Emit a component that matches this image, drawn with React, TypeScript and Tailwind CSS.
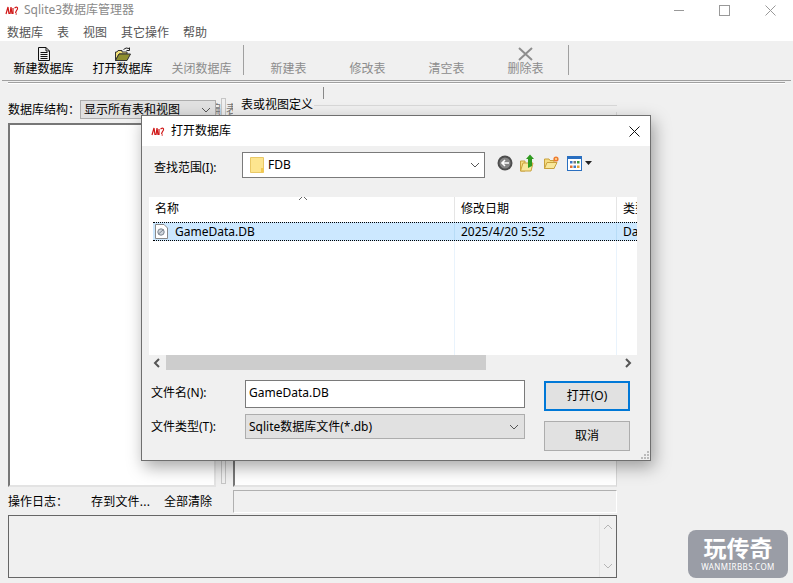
const cjk = "font-['Noto_Sans','Noto_Sans_CJK_SC',sans-serif]"

function AppLogo() {
  return (
    <svg width="14" height="10" viewBox="0 0 14 10" fill="none" stroke="#d01818" strokeWidth="1.2">
      <path d="M1 9 L3 2 L4 9 M5 9 L6 2 L7 9 M8 3 L8 9 M9.5 3 Q13 1 12.5 4 Q11 6 10.5 8 M10.5 9 L12 9" />
    </svg>
  )
}

function DocIcon() {
  return (
    <svg width="12" height="14" viewBox="0 0 12 14" fill="none" stroke="#111" strokeWidth="1">
      <path d="M.5 .5 H8 L11.5 4 V13.5 H.5 Z M8 .5 V4 H11.5" />
      <path d="M2.5 5.5 H9.5 M2.5 7.5 H9.5 M2.5 9.5 H9.5 M2.5 11.5 H9.5" />
    </svg>
  )
}

function OpenFolderIcon() {
  return (
    <svg width="16" height="14" viewBox="0 0 16 14" fill="none">
      <path d="M.5 5 H2 L3 3.5 H7 V5 H12 V7 H4 L.5 13.5 Z" fill="#f3e27a" stroke="#333" />
      <path d="M4 7 H15.5 L12 13.5 H.5 Z" fill="#8f8f30" stroke="#333" />
      <path d="M8.5 2.5 Q11 0 14 1.5 M14.5 .5 V3.5 H11.5" stroke="#222" />
    </svg>
  )
}

function DeleteIcon() {
  return (
    <svg width="15" height="14" viewBox="0 0 15 14" fill="none" stroke="#8e8e8e" strokeWidth="2">
      <path d="M1 1 L14 13 M14 1 L1 13" />
    </svg>
  )
}

function ToolButton({ label, icon, disabled }: { label: string; icon?: React.ReactNode; disabled?: boolean }) {
  return (
    <div className={`flex w-[79px] flex-col items-center ${disabled ? "text-[#8c8c8c]" : "text-black"}`}>
      <div className="flex h-[20px] items-end justify-center">{icon}</div>
      <span className="text-xs leading-[16px]">{label}</span>
    </div>
  )
}

function Chevron({ dir = "down", color = "#555" }: { dir?: "down" | "up" | "left" | "right"; color?: string }) {
  const d = {
    down: "M1 1 L5 5 L9 1",
    up: "M1 5 L5 1 L9 5",
    left: "M6 1 L2 5 L6 9",
    right: "M2 1 L6 5 L2 9",
  }[dir]
  const vertical = dir === "down" || dir === "up"
  return (
    <svg width={vertical ? 10 : 8} height={vertical ? 6 : 10} viewBox={vertical ? "0 0 10 6" : "0 0 8 10"} fill="none" stroke={color} strokeWidth={vertical ? 1 : 2}>
      <path d={d} />
    </svg>
  )
}

function NavIcons() {
  return (
    <div className="ml-3 mt-[2px] flex items-center">
      <svg width="16" height="16" viewBox="0 0 16 16">
        <circle cx="8" cy="8" r="7.5" fill="#4d4d4d" />
        <circle cx="8" cy="8" r="5.5" fill="#858585" />
        <path d="M12 8 H5 M8 5 L5 8 L8 11" fill="none" stroke="#fff" strokeWidth="1.6" />
      </svg>
      <svg className="ml-[7px]" width="15" height="18" viewBox="0 0 15 18">
        <path d="M.5 7 H5 V17 L.5 17 Z" fill="#f5dc80" stroke="#c9a13c" />
        <path d="M.5 17 L3 9 H13 L11 17 Z" fill="#f8e79a" stroke="#c9a13c" />
        <path d="M8 14 V5 H6 L10 .5 L14 5 H12 V12 Z" fill="#2f9a20" />
      </svg>
      <svg className="ml-[9px]" width="15" height="14" viewBox="0 0 15 14">
        <path d="M.5 3 H5 L6 4.5 H10 V12.5 H.5 Z" fill="#f5dc80" stroke="#c9a13c" />
        <path d="M.5 12.5 L3 6.5 H13 L10 12.5 Z" fill="#f8e79a" stroke="#c9a13c" />
        <circle cx="12" cy="3" r="2.6" fill="#ee7b2e" />
        <circle cx="12" cy="3" r="1" fill="#ffe0a0" />
      </svg>
      <svg className="ml-2" width="15" height="15" viewBox="0 0 15 15">
        <rect x=".5" y=".5" width="14" height="14" fill="#fff" stroke="#2a6fc0" />
        <rect x="1" y="1" width="13" height="2" fill="#2a6fc0" />
        <rect x="3" y="5" width="2.5" height="2.5" fill="#3b78c8" />
        <rect x="6.5" y="5" width="2.5" height="2.5" fill="#777" />
        <rect x="10" y="5" width="2.5" height="2.5" fill="#3a9a40" />
        <rect x="3" y="9.5" width="2.5" height="2.5" fill="#e07030" />
        <rect x="6.5" y="9.5" width="2.5" height="2.5" fill="#3b78c8" />
        <rect x="10" y="9.5" width="2.5" height="2.5" fill="#e0a030" />
      </svg>
      <svg className="ml-[3px]" width="7" height="4" viewBox="0 0 7 4">
        <path d="M0 0 H7 L3.5 4 Z" fill="#222" />
      </svg>
    </div>
  )
}

function FileDialog() {
  return (
    <div className="absolute left-[141px] top-[115px] flex h-[346px] w-[510px] flex-col border border-[#6f6f6f] bg-[#f0f0f0] shadow-[3px_6px_16px_rgba(0,0,0,0.35)]">
      <div className="flex h-[30px] shrink-0 items-center bg-white pl-[9px] text-xs">
        <AppLogo />
        <span className="ml-[6px]">打开数据库</span>
        <svg className="ml-auto mr-[10px]" width="11" height="11" viewBox="0 0 11 11" stroke="#111" fill="none">
          <path d="M.5 .5 L10.5 10.5 M10.5 .5 L.5 10.5" />
        </svg>
      </div>

      <div className="flex h-[51px] shrink-0 items-start pt-[6px]">
        <span className="ml-3 mt-[8px] w-[88px] text-xs leading-[16px]">查找范围(I):</span>
        <div className="flex h-[26px] w-[243px] items-center border border-[#7a7a7a] bg-white pl-[7px] pr-[3px] text-xs">
          <svg width="14" height="16" viewBox="0 0 14 16">
            <path d="M.5 .5 H13.5 V15.5 H.5 Z" fill="#fde58f" stroke="#e9c866" />
            <path d="M11 11 H13.5 V15.5 H11 Z" fill="#f3c94f" />
          </svg>
          <span className="ml-[4px]">FDB</span>
          <span className="ml-auto mr-[1px] flex"><Chevron /></span>
        </div>
        <NavIcons />
      </div>

      <div className="relative ml-[7px] h-[158px] w-[488px] shrink-0 overflow-hidden bg-white text-xs">
        <div className="flex h-[25px] items-center">
          <span className="relative flex h-full w-[306px] shrink-0 items-center border-r border-[#e5e5e5] pb-[2px] pl-[6px]">
            名称
            <span className="absolute left-[149px] top-[-2px] flex"><Chevron dir="up" color="#666" /></span>
          </span>
          <span className="flex h-full w-[162px] shrink-0 items-center border-r border-[#e5e5e5] pb-[2px] pl-[6px]">修改日期</span>
          <span className="shrink-0 whitespace-nowrap pb-[2px] pl-[6px]">类型</span>
        </div>
        <div className="ml-1 flex h-[19px] items-center border-y border-dotted border-black bg-[#cce8ff]">
          <div className="flex w-[301px] shrink-0 items-center pl-[2px]">
            <svg width="13" height="15" viewBox="0 0 13 15">
              <path d="M.5 .5 H9 L12.5 4 V14.5 H.5 Z" fill="#fff" stroke="#8a8a8a" />
              <circle cx="6" cy="8" r="3.2" fill="#d0d6dc" stroke="#7a8490" />
              <path d="M3.5 10 L8.5 5.5" stroke="#7a8490" />
            </svg>
            <span className="ml-[7px]">GameData.DB</span>
          </div>
          <span className="w-[162px] shrink-0 border-l border-[#b7dcf7] pl-[6px]">2025/4/20 5:52</span>
          <span className="shrink-0 border-l border-[#b7dcf7] pl-[6px]">Da</span>
        </div>
        <div className="absolute left-[305px] top-[44px] h-[114px] w-px bg-[#e9f3fc]" />
        <div className="absolute left-[467px] top-[44px] h-[114px] w-px bg-[#e9f3fc]" />
      </div>

      <div className="ml-[7px] flex h-[15px] w-[488px] shrink-0 items-center">
        <span className="ml-1 flex w-[13px]"><Chevron dir="left" /></span>
        <div className="h-full w-[320px] bg-[#cdcdcd]" />
        <span className="ml-auto mr-[5px] flex"><Chevron dir="right" /></span>
      </div>

      <div className="flex flex-1 items-start pt-[10px]">
        <div className="ml-[9px] flex w-[374px] flex-col text-xs">
          <div className="flex items-center">
            <span className="w-[94px] pb-[2px]">文件名(N):</span>
            <div className="flex h-[28px] w-[280px] items-center border border-[#7a7a7a] bg-white pb-[2px] pl-[3px]">GameData.DB</div>
          </div>
          <div className="mt-[6px] flex items-center">
            <span className="w-[94px]">文件类型(T):</span>
            <div className="flex h-[25px] w-[280px] items-center border border-[#adadad] bg-[#e1e1e1] pl-[3px] pr-[5px]">
              Sqlite数据库文件(*.db)
              <span className="ml-auto flex"><Chevron /></span>
            </div>
          </div>
        </div>
        <div className="ml-[19px] flex flex-col text-xs">
          <div className="mt-px flex h-[30px] w-[86px] items-center justify-center border-2 border-[#0078d7] bg-[#e1e1e1]">打开(O)</div>
          <div className="mt-[10px] flex h-[30px] w-[86px] items-center justify-center border border-[#adadad] bg-[#e1e1e1]">取消</div>
        </div>
      </div>
      <div className="absolute bottom-px right-px grid grid-cols-3 gap-px">
        <i className="col-start-3 h-[2px] w-[2px] bg-[#bbb]" />
        <i className="col-start-2 h-[2px] w-[2px] bg-[#bbb]" />
        <i className="h-[2px] w-[2px] bg-[#bbb]" />
        <i className="h-[2px] w-[2px] bg-[#bbb]" />
        <i className="h-[2px] w-[2px] bg-[#bbb]" />
        <i className="h-[2px] w-[2px] bg-[#bbb]" />
      </div>
    </div>
  )
}

export default function App() {
  return (
    <div className={`relative flex h-[583px] w-[793px] flex-col overflow-hidden bg-[#f0f0f0] text-black ${cjk}`}>
      {/* title bar + menu */}
      <div className="h-[41px] shrink-0 bg-white">
        <div className="flex h-[20px] items-center pl-[5px]">
          <AppLogo />
          <span className="ml-[5px] text-xs text-[#8a8a8a]">Sqlite3数据库管理器</span>
          <div className="ml-auto flex items-center text-[#888]">
            <span className="h-px w-[10px] bg-[#999]" />
            <span className="ml-[35px] h-[11px] w-[11px] border border-[#999]" />
            <svg className="ml-[35px] mr-[17px]" width="11" height="11" viewBox="0 0 11 11" fill="none" stroke="#999">
              <path d="M.5 .5 L10.5 10.5 M10.5 .5 L.5 10.5" />
            </svg>
          </div>
        </div>
        <div className="mt-[4px] flex gap-[14px] pl-[7px] text-xs leading-[18px] text-[#555]">
          <span>数据库</span>
          <span>表</span>
          <span>视图</span>
          <span>其它操作</span>
          <span>帮助</span>
        </div>
      </div>

      {/* toolbar */}
      <div className="flex h-[39px] shrink-0 items-start pl-1">
        <ToolButton label="新建数据库" icon={<DocIcon />} />
        <ToolButton label="打开数据库" icon={<OpenFolderIcon />} />
        <ToolButton label="关闭数据库" disabled />
        <div className="ml-[2px] mr-[5px] mt-[4px] h-[30px] w-px bg-[#a0a0a0]" />
        <ToolButton label="新建表" disabled />
        <ToolButton label="修改表" disabled />
        <ToolButton label="清空表" disabled />
        <ToolButton label="删除表" icon={<DeleteIcon />} disabled />
        <div className="ml-[3px] mt-[4px] h-[30px] w-px bg-[#a0a0a0]" />
      </div>
      <div className="mx-[2px] h-px shrink-0 bg-[#a0a0a0]" />
      <div className="ml-2 mr-2 mt-px h-[2px] shrink-0 border-t border-[#a0a0a0] bg-white" />

      {/* main */}
      <div className="flex min-h-0 flex-1 px-2 pt-[3px]">
        <div className="flex w-[208px] shrink-0 flex-col">
          <div className="mt-[13px] flex h-[19px] items-center text-xs">
            <span className="w-[72px]">数据库结构：</span>
            <div className="flex h-[19px] w-[136px] items-center border border-[#adadad] bg-[#e1e1e1] pl-[3px] pr-1">
              显示所有表和视图
              <span className="ml-auto flex"><Chevron /></span>
            </div>
          </div>
          <div className="mt-[4px] h-[364px] border-2 border-b-[#e3e3e3] border-l-[#777] border-r-[#e3e3e3] border-t-[#777] bg-white" />
          <div className="mt-[4px] flex h-[22px] items-center text-xs">
            <span className="w-[83px]">操作日志：</span>
            <span className="w-[73px] tracking-[0.2px]">存到文件...</span>
            <span>全部清除</span>
          </div>
        </div>

        {/* splitter, with the tab captions it cuts through */}
        <div className="flex w-[17px] shrink-0 items-start pt-[11px] text-xs text-[#777]">
          <span className="mt-[4px] flex h-[16px] w-[5px] justify-end overflow-hidden leading-[16px]">编</span>
          <div className="h-[386px] w-[5px] shrink-0 border border-[#c6c6c6] bg-[#f0f0f0]" />
          <span className="mt-[4px] h-[16px] w-[7px] overflow-hidden leading-[16px]">表</span>
        </div>

        <div className="flex flex-1 flex-col">
          <div className="h-[12px] w-px translate-x-[90px] bg-[#888]" />
          <div className="-mt-px flex h-[14px] w-[384px] items-center">
            <span className="ml-2 text-xs leading-[14px]">表或视图定义</span>
            <div className="ml-px h-px flex-1 bg-[#d8d8d8]" />
          </div>
          <div className="h-[8px] w-[384px] border-r border-[#d8d8d8]" />
          <div className="h-[367px] w-[384px] border-b-2 border-l-2 border-r border-b-[#e3e3e3] border-l-[#777] border-r-[#d8d8d8] bg-white" />
          <div className="mt-[3px] h-[23px] w-[384px] border border-b-white border-l-[#b0b0b0] border-r-white border-t-[#b0b0b0]" />
        </div>
      </div>

      {/* log */}
      <div className="mx-2 mb-[5px] flex h-[63px] w-[609px] shrink-0 justify-end border border-[#666]">
        <div className="flex w-[17px] flex-col items-center justify-between border-l border-[#e4e4e4] py-[8px]">
          <Chevron dir="up" color="#b5b5b5" />
          <Chevron dir="down" color="#b5b5b5" />
        </div>
      </div>

      <FileDialog />

      <div className="absolute left-[688px] top-[530px] flex h-[48px] w-[100px] flex-col items-center rounded-lg bg-[#9a9da6] text-white">
        <span className="mt-[5px] text-[23px] font-bold leading-[26px]">玩传奇</span>
        <span className="text-[8px] leading-[12px] tracking-[0.4px]">WANMIRBBS.COM</span>
      </div>
    </div>
  )
}
